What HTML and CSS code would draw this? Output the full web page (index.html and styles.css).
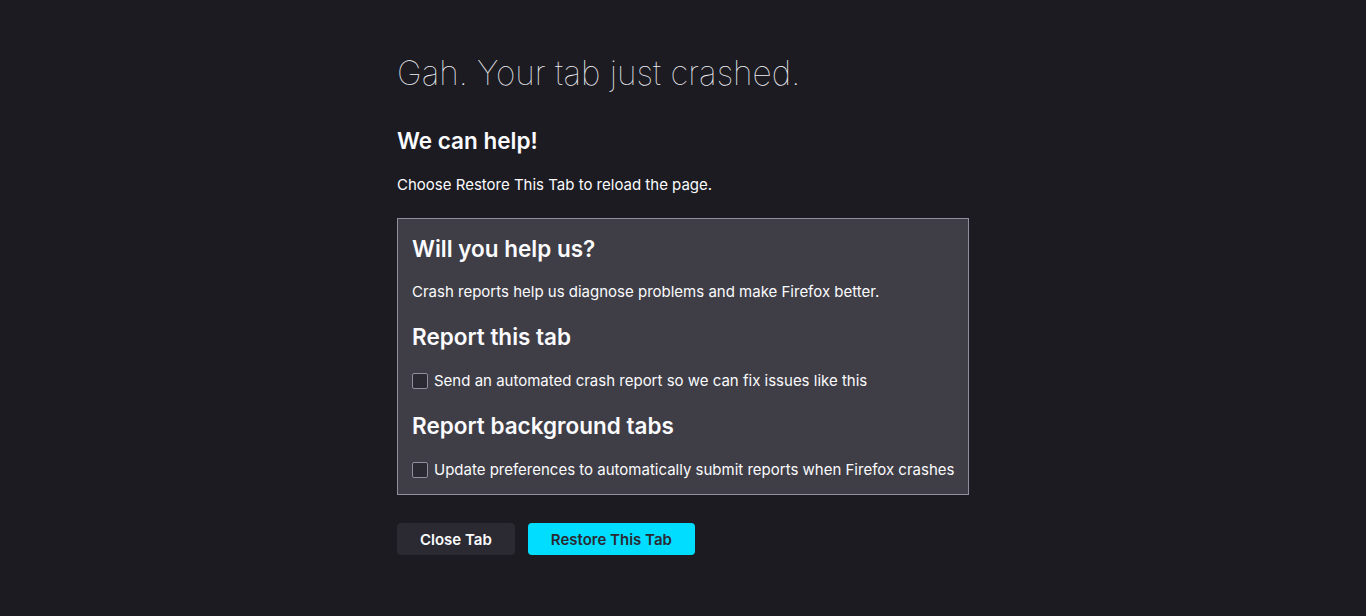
FILE: index.html
```html
<!DOCTYPE html>
<html lang="en">
<head>
<meta charset="utf-8">
<title>Tab crashed</title>
<link rel="stylesheet" href="styles.css">
</head>
<body>
<main class="container">
  <h1 class="title">Gah. Your tab just crashed.</h1>
  <h2 class="subtitle">We can help!</h2>
  <p class="text">Choose Restore This Tab to reload the page.</p>
  <section class="box">
    <h2 class="box-title">Will you help us?</h2>
    <p class="text box-text">Crash reports help us diagnose problems and make Firefox better.</p>
    <h2 class="box-title">Report this tab</h2>
    <label class="check-row"><span class="checkbox"></span>Send an automated crash report so we can fix issues like this</label>
    <h2 class="box-title">Report background tabs</h2>
    <label class="check-row"><span class="checkbox"></span>Update preferences to automatically submit reports when Firefox crashes</label>
  </section>
  <div class="buttons">
    <button class="btn btn-secondary">Close Tab</button>
    <button class="btn btn-primary">Restore This Tab</button>
  </div>
</main>
</body>
</html>
```
FILE: styles.css
```css
html, body {
  margin: 0;
  padding: 0;
  background: #1c1b22;
  color: #fbfbfe;
  font-family: Inter, "Noto Sans", sans-serif;
  font-size: 15px;
}
.container {
  width: 572px;
  margin: 0 auto;
  padding-top: 51px;
}
.title {
  margin: 0;
  font-size: 33.4px;
  font-weight: 100;
  line-height: 44px;
  color: #f0f0f4;
}
.subtitle {
  margin: 31px 0 0 0;
  font-size: 22.5px;
  font-weight: 600;
  line-height: 30px;
}
.text {
  margin: 19px 0 0 0;
  line-height: 20px;
}
.box {
  margin-top: 23px;
  background: #3f3e46;
  border: 1px solid #8f8f9d;
  padding: 15px 14px 14px 14px;
}
.box-title {
  margin: 20px 0 0 0;
  font-size: 22.5px;
  font-weight: 600;
  line-height: 30px;
}
.box-title:first-child {
  margin-top: 0;
}
.box .box-text {
  margin-top: 18px;
}
.check-row {
  display: flex;
  align-items: center;
  gap: 6px;
  margin-top: 19px;
  line-height: 20px;
  white-space: nowrap;
}
.checkbox {
  width: 14px;
  height: 14px;
  border: 1px solid #8f8f9d;
  background: #2b2a33;
  border-radius: 2px;
  flex: none;
}
.buttons {
  display: flex;
  gap: 13px;
  margin-top: 28px;
}
.btn {
  font-family: Inter, "Noto Sans", sans-serif;
  font-size: 15px;
  font-weight: 600;
  height: 32px;
  border: none;
  border-radius: 4px;
  padding: 0 23px;
}
.btn-secondary {
  background: #2b2a33;
  color: #fbfbfe;
}
.btn-primary {
  background: #00ddff;
  color: #2b2a33;
}
```
